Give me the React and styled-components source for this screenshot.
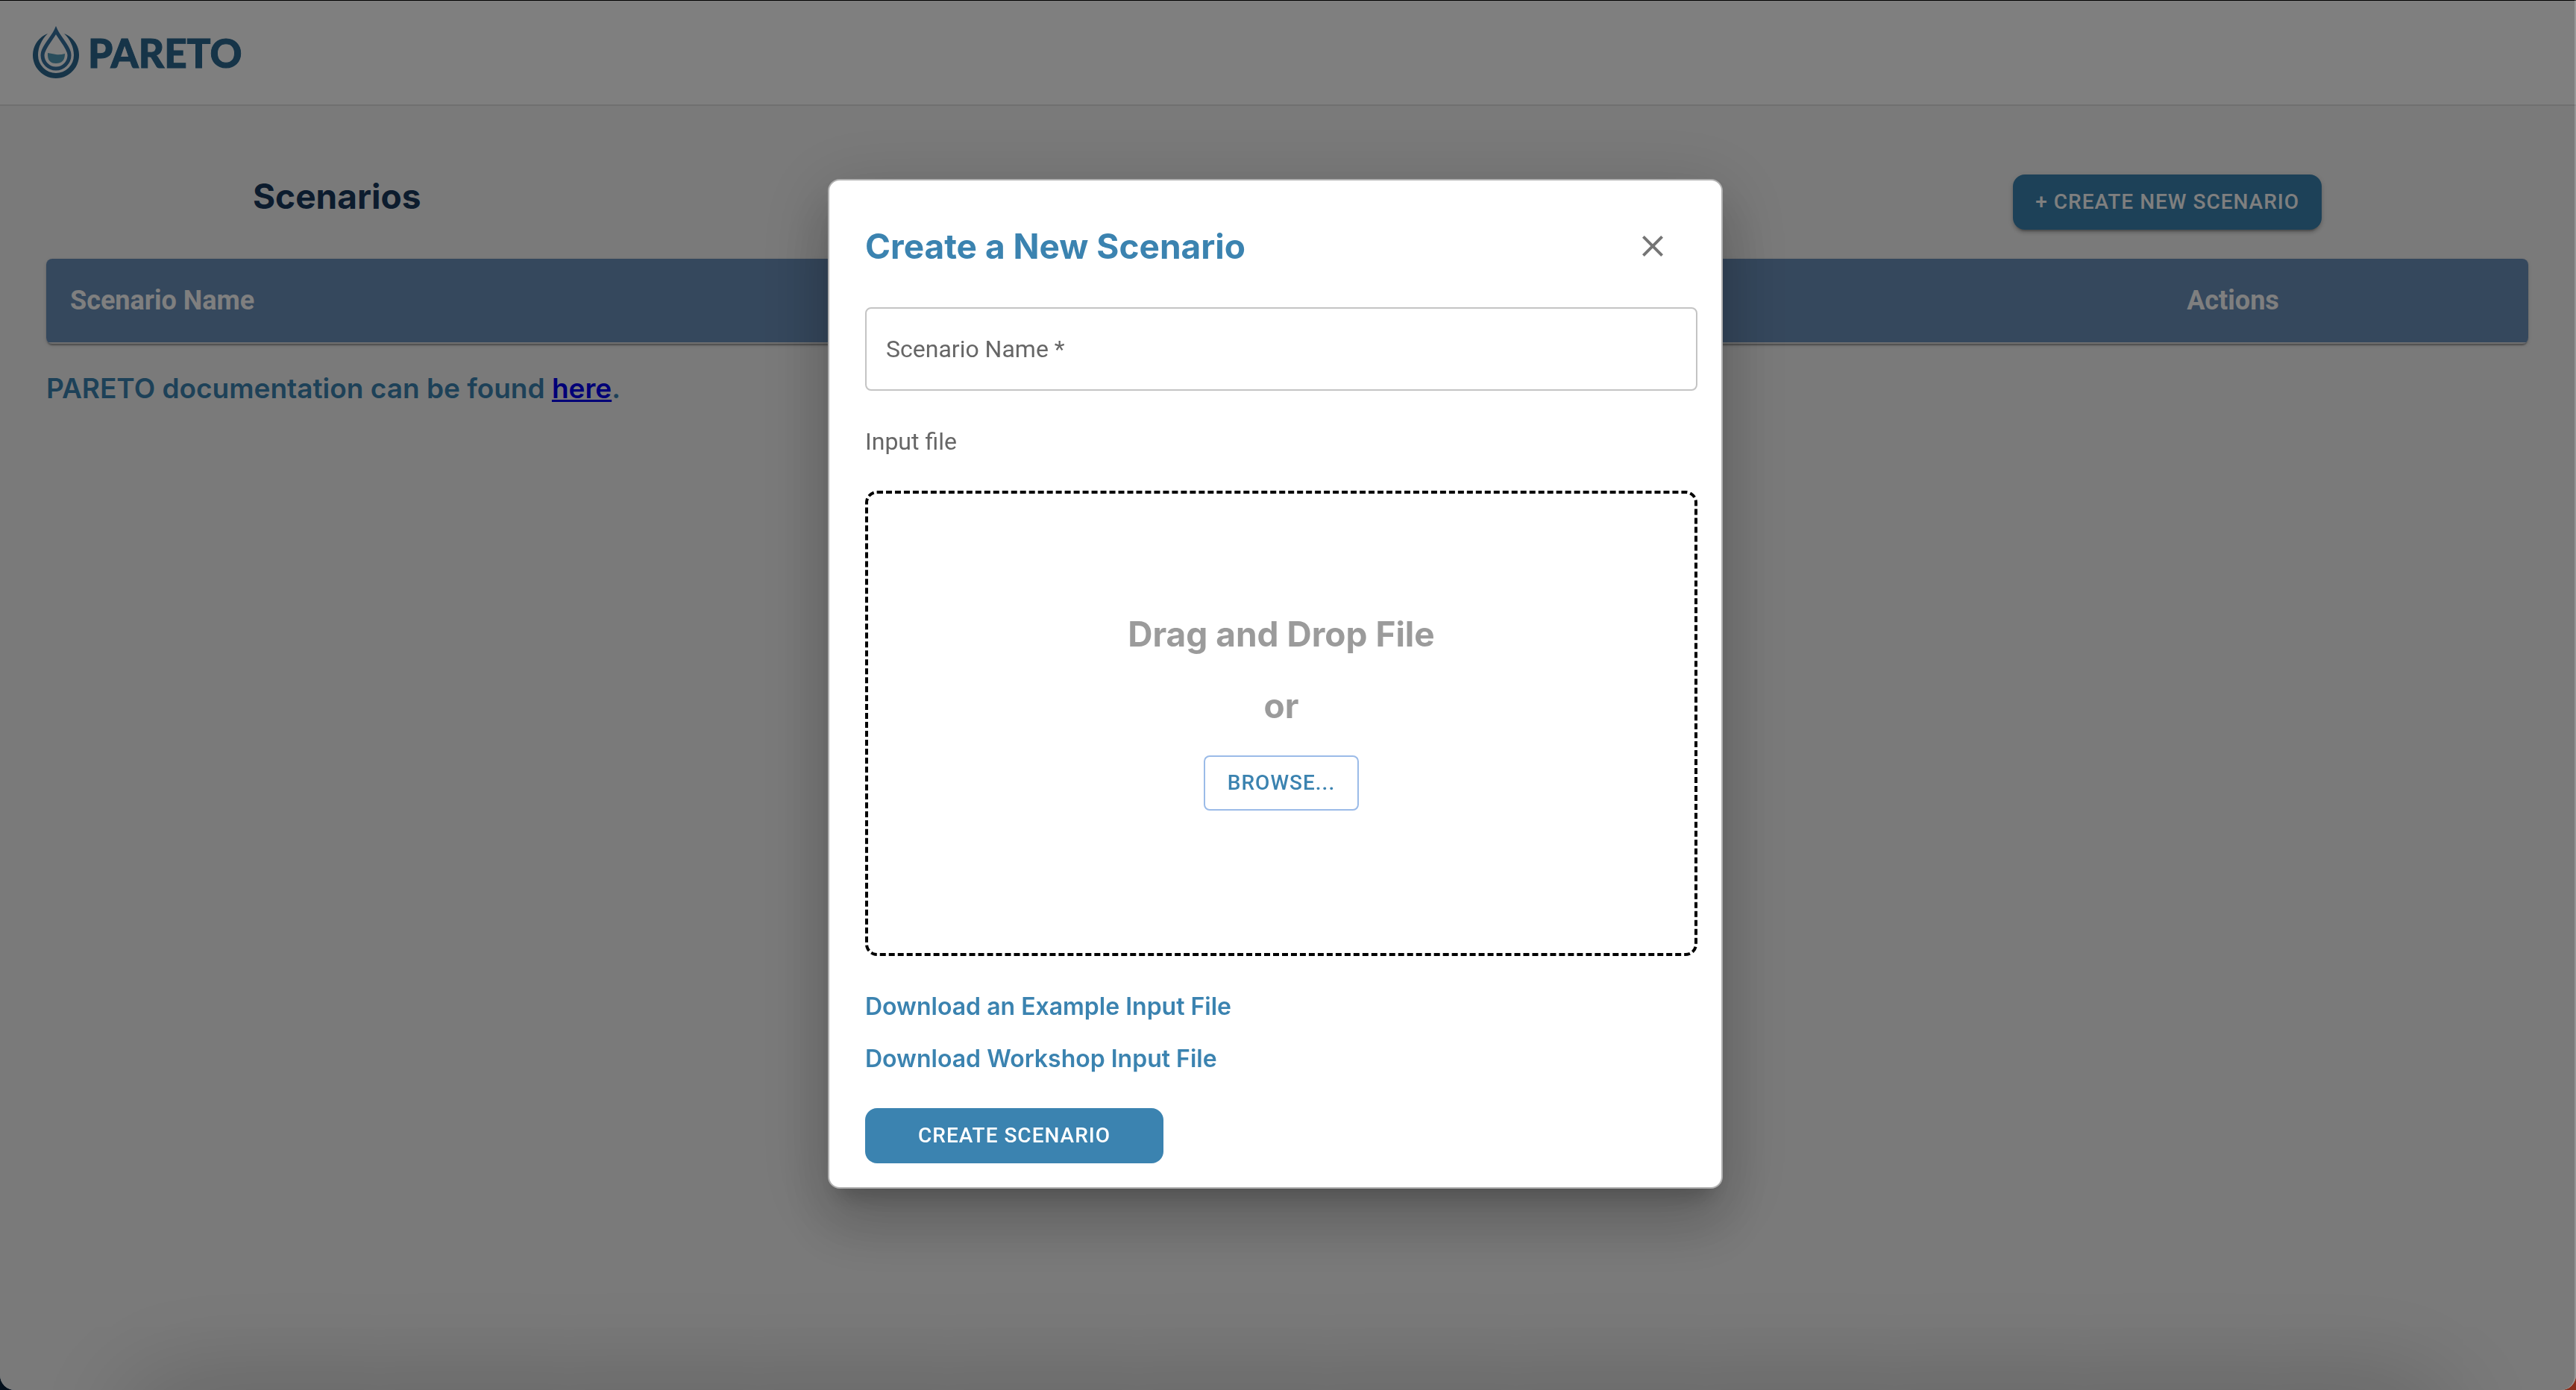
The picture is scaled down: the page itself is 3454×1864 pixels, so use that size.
import React from "react";
import styled, { createGlobalStyle } from "styled-components";

const blue = "#3b83b0";
const display = `Inter, "Liberation Sans", sans-serif`;
const body = `Roboto, "Liberation Sans", sans-serif`;

const GlobalStyle = createGlobalStyle`
  *, *::before, *::after { box-sizing: border-box; }
  html { background: linear-gradient(90deg, #04101c 50%, #8a2f1c 50%); }
  body { margin: 0; font-family: ${body}; }
  h1, h2, p { margin: 0; }
`;

const Page = styled.div`
  min-height: 100vh;
  overflow: hidden;
  border-top: 1px solid #000;
  border-radius: 0 0 20px 20px;
  background: #f5f5f5;
`;

const TopBar = styled.header`
  display: flex;
  align-items: center;
  height: 141px;
  padding: 0 44px;
  border-bottom: 2px solid #e0e0e0;
  background: #fff;
`;

const Brand = styled.a`
  display: flex;
  align-items: center;
  gap: 12px;
  color: #2c6890;
  font: 900 53px/60px Lato, sans-serif;
  -webkit-text-stroke: 1px currentColor;
  text-decoration: none;
`;

const Main = styled.main`
  padding: 92px 64px 0 62px;
`;

const Toolbar = styled.div`
  display: flex;
  align-items: flex-start;
  justify-content: space-between;
  padding: 0 277px;
`;

const PageTitle = styled.h1`
  color: #18385c;
  font: 700 46px/58px ${display};
`;

const Button = styled.button`
  height: 74px;
  padding: 0 30px;
  border: 0;
  border-radius: 16px;
  background: ${blue};
  color: #fff;
  font: 500 28px/48px ${body};
  letter-spacing: 1px;
  text-transform: uppercase;
  cursor: pointer;
`;

const RaisedButton = styled(Button)`
  box-shadow: 0 6px 2px -4px rgba(0, 0, 0, 0.2), 0 4px 4px rgba(0, 0, 0, 0.14),
    0 2px 10px rgba(0, 0, 0, 0.12);
`;

const SubmitButton = styled(Button)`
  width: 400px;
`;

const BrowseButton = styled(Button)`
  border: 2px solid #9bbbe8;
  border-radius: 8px;
  background: #fff;
  color: ${blue};
`;

const TableCard = styled.div`
  margin-top: 39px;
  overflow: hidden;
  border-radius: 8px;
  background: #fff;
  box-shadow: 0 4px 2px -2px rgba(0, 0, 0, 0.2), 0 2px 2px rgba(0, 0, 0, 0.14),
    0 2px 6px rgba(0, 0, 0, 0.12);
`;

const Table = styled.table`
  width: 100%;
  border-collapse: separate;
  border-spacing: 0;
  table-layout: fixed;
`;

const HeadCell = styled.th`
  width: ${(p) => p.$width || "auto"};
  height: 114px;
  padding: 0 32px;
  border-bottom: 2px solid #e0e0e0;
  background: #6b90ba;
  color: #fff;
  font: 700 36px/48px ${body};
  text-align: ${(p) => p.$align || "left"};
`;

const DocNote = styled.p`
  margin-top: 36px;
  color: ${blue};
  font: 600 37px/48px ${display};
`;

const DocLink = styled.a`
  color: #0000ee;
`;

const Backdrop = styled.div`
  position: fixed;
  inset: 0;
  display: flex;
  align-items: flex-start;
  justify-content: center;
  padding: 240px 32px 0 0;
  overflow: hidden;
  border-radius: 0 0 20px 20px;
  border-right: 2px solid rgba(255, 255, 255, 0.2);
  background: rgba(0, 0, 0, 0.5);

  &::after {
    content: "";
    position: absolute;
    right: 180px;
    bottom: -200px;
    left: 180px;
    height: 200px;
    box-shadow: 0 0 150px rgba(0, 0, 0, 0.24);
  }
`;

const Dialog = styled.section`
  width: 1200px;
  padding: 48px 32px 32px 48px;
  border: 2px solid #b0b0b0;
  border-radius: 16px;
  background: #fff;
  box-shadow: 0 22px 30px -14px rgba(0, 0, 0, 0.2),
    0 48px 76px 6px rgba(0, 0, 0, 0.14), 0 18px 92px 16px rgba(0, 0, 0, 0.12);
`;

const DialogHeader = styled.div`
  display: flex;
  align-items: center;
  justify-content: space-between;
  height: 80px;
  padding-right: 20px;
`;

const DialogTitle = styled.h2`
  color: ${blue};
  font: 700 46px/58px ${display};
`;

const IconButton = styled.button`
  display: grid;
  place-items: center;
  width: 80px;
  height: 80px;
  padding: 0;
  border: 0;
  border-radius: 50%;
  background: none;
  color: #757575;
  cursor: pointer;
`;

const TextField = styled.div`
  display: grid;
  margin-top: 42px;

  > * {
    grid-area: 1 / 1;
  }
`;

const FieldLabel = styled.label`
  align-self: center;
  padding-left: 28px;
  color: #666;
  font: 400 32px/48px ${body};
  pointer-events: none;
`;

const FieldInput = styled.input`
  width: 100%;
  height: 112px;
  padding: 0 26px;
  border: 2px solid #c4c4c4;
  border-radius: 8px;
  background: #fff;
  font: 400 32px/48px ${body};

  &:not(:placeholder-shown) + label {
    visibility: hidden;
  }
`;

const Caption = styled.p`
  margin-top: 44px;
  color: #666;
  font: 400 32px/48px ${body};
`;

const DropZone = styled.div`
  display: flex;
  flex-direction: column;
  align-items: center;
  justify-content: center;
  height: 624px;
  margin-top: 42px;
  padding-bottom: 32px;
  border: 4px dashed #000;
  border-radius: 16px;
`;

const DropText = styled.p`
  margin-bottom: 38px;
  color: #9b9b9b;
  font: 700 46px/58px ${display};
`;

const Downloads = styled.div`
  display: flex;
  flex-direction: column;
  align-items: flex-start;
  gap: 22px;
  margin: 44px 0 42px;
`;

const DownloadLink = styled.a`
  color: ${blue};
  font: 600 32px/48px ${display};
  text-decoration: none;
`;

function DropLogo() {
  return (
    <svg width="62" height="72" viewBox="0 0 62 72" aria-hidden="true">
      <path
        d="M20 10A31 31 0 1 0 42 10C50 18 55 28 55 39A24 24 0 0 1 7 39C7 28 12 18 20 10Z"
        fill="#2c6890"
      />
      <path
        d="M31 6C27 15 13 29 13 39a18 18 0 0 0 36 0C49 29 35 15 31 6Z"
        fill="#fff"
        stroke="#3672a0"
        strokeWidth="5"
      />
      <path d="M20 36q6 1 11 2t12-1q0 13-12 13T20 36Z" fill="#529ab8" />
    </svg>
  );
}

function CloseIcon() {
  return (
    <svg width="48" height="48" viewBox="0 0 24 24" fill="currentColor" aria-hidden="true">
      <path d="M19 6.41 17.59 5 12 10.59 6.41 5 5 6.41 10.59 12 5 17.59 6.41 19 12 13.41 17.59 19 19 17.59 13.41 12z" />
    </svg>
  );
}

export default function App() {
  return (
    <>
      <GlobalStyle />
      <Page>
        <TopBar>
          <Brand href="#home">
            <DropLogo />
            PARETO
          </Brand>
        </TopBar>
        <Main>
          <Toolbar>
            <PageTitle>Scenarios</PageTitle>
            <RaisedButton type="button">+ Create New Scenario</RaisedButton>
          </Toolbar>
          <TableCard>
            <Table>
              <thead>
                <tr>
                  <HeadCell scope="col">Scenario Name</HeadCell>
                  <HeadCell scope="col" $width="792px" $align="center">
                    Actions
                  </HeadCell>
                </tr>
              </thead>
            </Table>
          </TableCard>
          <DocNote>
            PARETO documentation can be found <DocLink href="#docs">here</DocLink>.
          </DocNote>
        </Main>
      </Page>
      <Backdrop>
        <Dialog role="dialog" aria-modal="true" aria-labelledby="dialog-title">
          <DialogHeader>
            <DialogTitle id="dialog-title">Create a New Scenario</DialogTitle>
            <IconButton type="button" aria-label="Close">
              <CloseIcon />
            </IconButton>
          </DialogHeader>
          <TextField>
            <FieldInput id="scenario-name" type="text" placeholder=" " required />
            <FieldLabel htmlFor="scenario-name">Scenario Name *</FieldLabel>
          </TextField>
          <Caption>Input file</Caption>
          <DropZone>
            <DropText>Drag and Drop File</DropText>
            <DropText>or</DropText>
            <BrowseButton type="button">Browse...</BrowseButton>
          </DropZone>
          <Downloads>
            <DownloadLink href="#example">Download an Example Input File</DownloadLink>
            <DownloadLink href="#workshop">Download Workshop Input File</DownloadLink>
          </Downloads>
          <SubmitButton type="button">Create Scenario</SubmitButton>
        </Dialog>
      </Backdrop>
    </>
  );
}
